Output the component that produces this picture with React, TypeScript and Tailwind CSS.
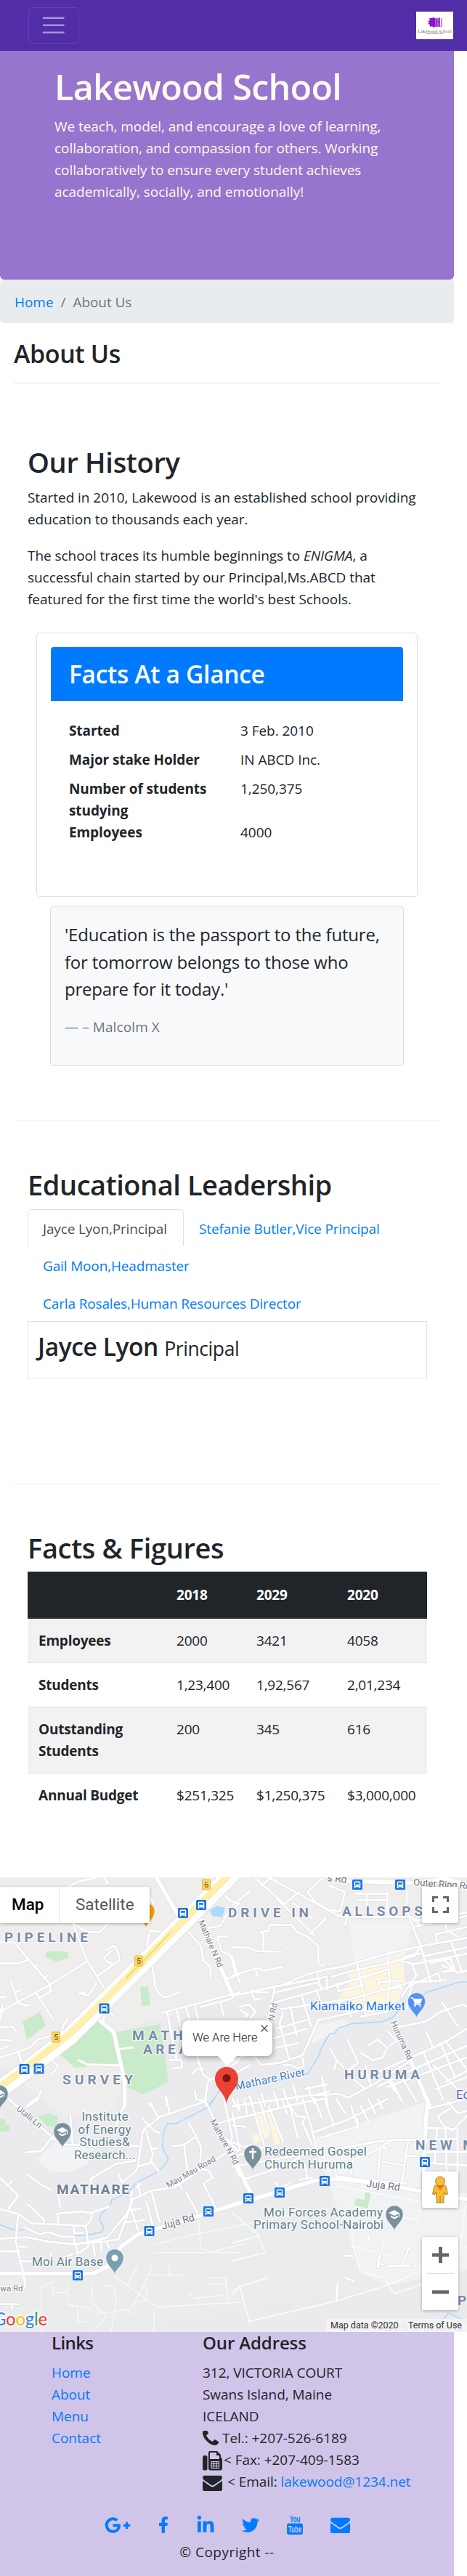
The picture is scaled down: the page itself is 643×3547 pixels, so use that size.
import React from "react";
import { FaFacebookF, FaGooglePlusG, FaLinkedinIn, FaTwitter } from "react-icons/fa";

const BODY = "font-['Open_Sans','Noto_Sans',sans-serif] text-[19px] leading-[30px] tracking-[-0.05px]";

function Logo() {
  return (
    <svg viewBox="0 0 51 38" className="h-[38px] w-[51px] bg-white">
      <path d="M24 8l2 1v12l-2 1-2-2-3 1v-3l-3-1 2-2-2-2 3-1-1-3 3 0z" fill="#8a14c8" />
      <path d="M26 9h3l4-1v12l2 1h-9z" fill="#b45fe0" />
      <path d="M28 10v10M28 14h4M32 9v11M35 9v12" stroke="#8a14c8" strokeWidth="1" fill="none" />
      <text x="25.500" y="28.500" textAnchor="middle" fontSize="5.600" fontFamily="Liberation Serif, serif" fill="#555" textLength="46">Lakewood school</text>
      <path d="M14 30.500h23" stroke="#888" strokeWidth="1" strokeDasharray="2 .7" />
    </svg>
  );
}

function Navbar() {
  return (
    <nav className="flex h-[70px] items-center justify-between bg-[#512da8] pl-[39px] pr-[19px]">
      <button className="flex h-[50px] w-[70px] items-center justify-center rounded-[5px] border border-white/10" aria-label="Menu">
        <svg viewBox="0 0 30 30" className="h-[37.5px] w-[37.5px]" stroke="rgba(255,255,255,.5)" strokeWidth="2" strokeLinecap="round">
          <path d="M4 7h22M4 15h22M4 23h22" />
        </svg>
      </button>
      <Logo />
    </nav>
  );
}

const FACTS = [
  ["Started", "3 Feb. 2010", "mb-[10px]"],
  ["Major stake Holder", "IN ABCD Inc.", "mb-[10px]"],
  ["Number of students studying", "1,250,375", ""],
  ["Employees", "4000", ""],
];

function FactsCard() {
  return (
    <div className="ml-[50px] mt-[31px] h-[364px] w-[525px] rounded-[5px] border border-[#dfdfdf] p-[19px]">
      <div className="h-[74px] rounded-t-[4px] border-b border-[#006fe6] bg-[#007bff] px-[25px] pt-[16px]">
        <h3 className="text-[33.5px] font-semibold leading-[42px] tracking-[-0.009em] text-white">Facts At a Glance</h3>
      </div>
      <dl className="px-[25px] pt-[26px]">
        {FACTS.map(([k, v, gap]) => (
          <div key={k} className={`flex ${gap}`}>
            <dt className="w-[236px] shrink-0 pr-[30px] font-bold tracking-[-0.005em]">{k}</dt>
            <dd>{v}</dd>
          </div>
        ))}
      </dl>
    </div>
  );
}

function Quote() {
  return (
    <blockquote className="ml-[69px] mt-[12px] h-[221px] w-[487px] rounded-[5px] border border-[#d9dadb] bg-[#f8f9fa] px-[19px] pt-[20px]">
      <p className="whitespace-nowrap text-[24px] leading-[37.5px] tracking-[-0.2px]">
        'Education is the passport to the future,<br />for tomorrow belongs to those who<br />prepare for it today.'
      </p>
      <footer className="mt-[18px] tracking-[0.1px] text-[#6c757d]">— – Malcolm X</footer>
    </blockquote>
  );
}

const ROWS = [
  ["Employees", "2000", "3421", "4058"],
  ["Students", "1,23,400", "1,92,567", "2,01,234"],
  ["Outstanding Students", "200", "345", "616"],
  ["Annual Budget", "$251,325", "$1,250,375", "$3,000,000"],
];

function Figures() {
  return (
    <table className="ml-[38px] mt-[9px] w-[550px] table-fixed border-collapse text-left tracking-[-0.012em]">
      <colgroup>
        <col className="w-[190px]" />
        <col className="w-[110px]" />
        <col className="w-[125px]" />
        <col className="w-[125px]" />
      </colgroup>
      <thead>
        <tr className="h-[63px] border-b-2 border-t border-[#32383e] bg-[#212529] text-white">
          {["", "2018", "2029", "2020"].map((h) => (
            <th key={h} className="pl-[15px] font-bold">{h}</th>
          ))}
        </tr>
      </thead>
      <tbody>
        {ROWS.map(([name, ...cells], i) => (
          <tr key={name} className={i % 2 === 0 ? "border-b border-[#dee2e6] bg-[#f2f2f2]" : i === 1 ? "border-b border-[#dee2e6]" : ""}>
            <th className="py-[15px] pl-[15px] pr-[30px] align-top font-bold">
              <span className={name === "Annual Budget" ? "whitespace-nowrap" : ""}>{name}</span>
            </th>
            {cells.map((c) => (
              <td key={c} className="py-[15px] pl-[15px] align-top">{c}</td>
            ))}
          </tr>
        ))}
      </tbody>
    </table>
  );
}

/* The map is drawn in four tiles, each at three units to the pixel. */
const TILES = [
  {
    at: "translate(0 -15) scale(.33333)",
    minor: [
      "M280 85L330 60 400 45M430 45L447 70", "M300 235L360 270 410 272 450 235", "M0 312L60 315 205 485",
      "M0 400H80L118 385M145 418L153 408M180 465L196 450", "M300 235L360 390 440 515", "M0 600L205 490 360 392",
      "M405 450L490 390Q500 365 472 328L442 345M466 345L430 375 440 392 462 400", "M148 522L220 632", "M205 490L210 515 160 545",
      "M45 472L75 565M60 520L88 510M75 560L105 575 122 572", "M0 540H25M10 575L0 630", "M0 590L15 600", "M0 665L55 662 65 682", "M0 715L50 720M0 755L35 742",
      "M0 790L75 765 125 748 155 715 250 690 265 650 282 628", "M75 765L92 820", "M215 800L240 825 212 862",
      "M398 475L395 490 365 532 325 525 350 520", "M595 80L635 155M605 330L620 265 665 270", "M765 265L650 370 630 415 640 490Q655 540 690 540L740 520",
      "M765 255L830 330 840 390 865 410 872 460", "M990 150L935 200 912 245 860 255M930 120L950 140 985 155", "M900 290H940M860 292L900 300 915 350 955 370 970 440",
      "M935 465L990 445M955 335H990", "M668 605L990 520", "M690 600L730 800M730 595L760 720M768 585L790 650M805 578L820 640M910 560L925 620M830 580L960 545",
      "M800 740L830 835 840 860 865 880Q850 900 850 990", "M795 855L815 835 840 835M865 885L990 800", "M805 925L810 960 845 970M685 950L690 990M620 980V990",
      "M700 800H750L752 830 712 835", "M325 800L360 818 490 822M490 755L548 748", "M430 610L428 640M455 600L468 620",
      "M170 925L160 950 115 985",
    ],
    major: ["M645 45L735 200M815 195L960 530M400 625L470 685 515 890 515 990"],
    river: ["M910 920L865 990"],
  },
  {
    at: "translate(320 -15) scale(.33333)",
    minor: [
      "M0 160L75 100M95 50L130 80 215 155 275 105M120 80L200 10M150 45L440 205 475 200M180 130L340 285M250 150L330 215M310 105L370 50M385 215L320 280",
      "M310 105L345 150 400 180 445 185 465 105 400 80M465 240L475 210", "M505 112H640V205M555 112V180M520 140H640M490 208H745",
      "M0 335H60L100 350 205 352M128 350V280L115 272 150 265 155 240 245 242 265 270 310 290 355 330V400L370 410 385 400",
      "M0 370L30 480M0 450L100 420 135 430 205 415M95 425L105 458", "M0 535L180 495 210 490 Q320 430 450 415 L640 360 800 325 969 295",
      "M210 490L390 455 390 510M175 520L350 480 370 500M180 560L450 485 640 425M200 590L500 545 730 480 880 470",
      "M0 540L15 525M80 510L90 550 120 545M95 520H150M30 580L70 570 95 600 75 625M30 590L65 615 50 620",
      "M175 500L140 660M350 445L365 500M515 400L545 550 550 620M640 370L650 480 635 590",
      "M410 455L500 430 640 400 750 370M420 490L620 435M430 485L440 515 540 490M600 480L680 470 700 510M600 480L620 510 690 500",
      "M670 385L740 400 760 450 700 535M720 100V180L745 250 775 320 820 480M745 250L969 205M845 310L840 280 969 250M880 235L885 265 930 290",
      "M740 405L969 360M750 370L775 335M790 370L969 335M820 400L900 380 920 430 870 435M905 315L950 440M865 410L920 430M750 225L969 190M735 220L760 215 770 245",
      "M690 390L720 370 775 360M720 590L740 490 850 440 860 470M875 385L930 440 969 430",
      "M210 600L195 650 235 800M240 580L265 700M285 530L325 660M180 670L320 630M170 710L310 670M175 750L270 730M0 805L75 770 120 820 200 810 290 780 355 635 600 580",
      "M345 510L385 600M440 560L470 600M480 600L490 620M530 620L640 600M210 820L240 820 270 835 295 825 290 790",
      "M475 715L520 810 480 840M560 740L600 715 640 750 620 790 580 800 530 770M405 755L430 800 420 840M430 800L460 830M550 820L570 905M640 680L680 720 650 740",
      "M680 665L800 640 860 600 950 570 969 580M865 560L930 660M600 850L870 730 969 670M600 910L700 860 969 740M640 910L969 790M800 680L830 750",
      "M860 730L920 870M880 720L969 840M790 770L870 960M830 820L969 960M700 870L760 970M660 890L700 970M630 850L670 930M880 890L969 845M840 920L969 870",
      "M0 860L75 820M0 990L320 945 440 940 480 955 600 890 740 800",
      "M70 950L85 990M120 940L135 990M170 930L190 990M210 920L230 980M250 900L270 970M310 910L340 980M370 870L395 985M300 920L390 900M340 945L400 930M490 870L550 920",
    ],
    major: ["M400 30L440 60 760 68 880 50 969 75M735 800L815 990"],
    river: ["M969 477H940L800 520 750 570 690 590 660 625 615 642 490 650 440 667 420 690 403 690 375 735 350 795 310 857 290 860 180 885 0 920"],
  },
  {
    at: "translate(0 305) scale(.33333)",
    minor: [
      "M0 325L75 400 35 455M40 350L52 340M112 312L170 355 210 375M240 395L248 445M115 435L182 500 180 515",
      "M0 455L75 475 130 515 220 518 355 525 375 500 380 470 450 445M75 475L65 590 95 715 105 780 90 790",
      "M230 475L330 465 380 472M240 475V515M100 530L165 560 200 550 250 568 305 570 320 640M355 525L365 610 320 640M305 525V555H345",
      "M0 578L110 572 200 590 300 600 430 590 490 580M320 600L440 575 520 480 550 415 620 380 720 365 930 225",
      "M0 630H80M80 610H110M90 670L130 672M0 848H75M50 848V870M265 655L300 640M210 640V660M385 600L392 650M415 585L420 625M440 590L450 615",
      "M375 350V330L480 268 560 255M490 315L505 345 560 300 570 280 590 130 660 75 850 10M570 280L620 265 632 230 605 140 600 130M590 85L640 135 660 140M620 15L655 80M690 0L700 60M625 205H650M625 260L655 298",
      "M290 65L300 190H270L230 170 35 0M105 222L170 215 215 160M480 110L520 0M300 190L570 195",
      "M710 195L760 190 810 155 780 100M760 190L775 300M810 155L830 200 825 290 860 295 878 325 840 350 890 450",
      "M545 380L540 440 490 580M570 350L580 400M580 350L565 365M540 450L570 540M530 460L580 455M520 510L595 500M605 425L635 540M625 380L660 510M770 390L815 470M990 320L845 0M890 105L990 75M925 0L960 160 950 185M960 0L990 50M930 160L980 215 990 210",
      "M740 355L750 370M160 0L110 35",
    ],
    major: ["M0 722H385L450 690 500 610 570 560 640 540 830 480 990 430"],
    river: ["M885 0L850 40 725 103 692 102 675 140 670 200 695 250 680 275 640 308 565 345 530 385 490 405 462 418 455 440 415 480 412 500 428 530 420 550 365 562 310 565", "M0 520L65 545 105 540"],
  },
  {
    at: "translate(320 305) scale(.33333)",
    minor: [
      "M0 85L290 15 380 0M0 180L50 200 75 190M0 60L30 210M0 110L55 115M20 0L30 40M50 0L60 60M75 0L130 190M110 0L150 130M150 30L210 180M205 0L225 60M235 20L270 160M240 30L265 70 300 75 290 100 330 190",
      "M290 0L330 130 345 200M340 0L370 80M380 0L420 110M430 0L465 60M490 30L520 120M530 30L570 110M560 0L590 60M600 0L620 40",
      "M330 140L480 85 640 0M365 160L520 115 515 80M0 280L640 170M0 240L130 200M55 330L210 280 345 200",
      "M420 280L430 320 540 335 720 350M490 310L500 250M610 210L600 330M620 260L710 275M725 175L700 350M500 250L580 220 660 168 760 170M620 195L640 210M720 235H760M275 335L330 325M180 345L190 370 235 350M300 270L310 330",
      "M805 120L930 125V300M845 120L835 265M880 125L885 300M800 170L930 165M800 220H969M805 265L969 275M810 40L969 0M850 75L870 110 910 130 969 70M890 10L930 60 969 50M850 70L900 40",
      "M560 565L570 595M460 648L500 650M465 740L500 752M435 755L430 835M600 695L610 640M600 680L625 685M645 690H735M700 690L720 640 725 620 740 615",
    ],
    major: ["M0 440L340 338 440 330 640 355 760 378 969 415", "M805 0L790 260 792 380", "M0 230L75 390"],
    river: ["M860 925L892 885 969 920"],
  },
];

const AIR_BASE_PATHS =
  "M640 600L820 555 960 530 1200 480M820 500L830 620 880 630 1000 600M630 680L610 740 545 860M640 635H1000M525 770L570 685M475 735L650 860 990 840M605 725L770 730M700 690V730M600 770L610 830 560 840M380 770V840L440 900 380 960M430 770L470 775 480 830 460 960M170 960V780L215 755 220 800 275 800M280 745V850L380 865M320 865V920H350M390 890L520 870 560 890M635 870V970M780 800L800 825 920 810M860 740H930L940 830 990 780M855 765H935M820 820V840";

function Bus({ x, y }: { x: number; y: number }) {
  return (
    <g transform={`translate(${x} ${y})`}>
      <rect x="-7" y="-7" width="14" height="14" rx="1.500" fill="#1a73e8" />
      <rect x="-4.300" y="-4.600" width="8.600" height="8" rx="1.500" fill="#fff" />
      <rect x="-3" y="-2.800" width="6" height="2.600" fill="#1a73e8" />
      <path d="M-3.500 3v2M3.500 3v2" stroke="#fff" strokeWidth="1.600" />
      <circle cx="-2.400" cy="1.600" r=".7" fill="#1a73e8" />
      <circle cx="2.400" cy="1.600" r=".7" fill="#1a73e8" />
    </g>
  );
}

function Pin({ x, y, fill, children }: { x: number; y: number; fill: string; children?: React.ReactNode }) {
  return (
    <g transform={`translate(${x} ${y})`}>
      <path d="M0 22C-1 16-12 10-12 0A12 12 0 0 1 12 0C12 10 1 16 0 22z" fill={fill} stroke="#fff" strokeOpacity=".6" strokeWidth=".6" />
      {children}
    </g>
  );
}

const Cap = () => (
  <path d="M0-6L-8-2 0 2 6-.8V4H7.200V-1.500zM-5 1.500V4L0 6.500 5 4V1.500L0 4z" fill="#fff" />
);

function Shield({ x, y, n }: { x: number; y: number; n: string }) {
  return (
    <g>
      <rect x={x - 5.5} y={y - 7} width="11" height="14" rx="1" fill="#fdd663" stroke="#e8b93a" strokeWidth="1" />
      <text x={x} y={y + 4} textAnchor="middle" fontSize="11" fill="#5c5540">{n}</text>
    </g>
  );
}

function MapDrawing() {
  const halo = { stroke: "#fff", strokeWidth: 2.5, strokeOpacity: 0.8, paintOrder: "stroke" as const, strokeLinejoin: "round" as const };
  return (
    <svg viewBox="0 0 643 626" className="block h-[626px] w-[643px]" fontFamily="Roboto, sans-serif">
      <rect width="643" height="626" fill="#efeeed" />
      <path d="M180 205L320 170 643 80V626H0V260L90 330 160 320z" fill="#ebebee" />
      <path d="M0 548H130L165 515 210 490 460 420 500 540 530 562 150 626H0z" fill="#ebeded" />
      <path d="M455 420L643 435V540L535 562 497 545 485 505 455 430z" fill="#f1f2f4" />
      <path d="M480 60H567L563 85 558 108 490 125zM430 360L585 310V430L455 420 440 395zM430 205L475 195 482 202 430 230z" fill="#f1f3f5" />
      <path d="M50 388L75 365 130 375 120 395 100 405 70 406z" fill="#f1f3f5" />
      <path d="M479 130L555 107 558 147 548 170 503 190 490 175 466 167 482 145zM352 328l10-4 5 18 6 12-22 14-4-12 12-5zM367 323l8-2 11 45-8 2z" fill="#fdf5dd" />
      <path d="M83 244L133 198 158 215 164 257 103 262zM160 213L221 202 232 282 198 299 170 287zM31 198L55 186 63 204 37 224zM193 151L204 150 207 176 195 177zM65 102L93 102 94 111 78 116 62 110zM52 329L68 325 79 329 80 345 66 343zM503 432l8 2-5 22-18-5 2-9 12 2zM0 333l7 0v8l7 0v9H0z" fill="#c8ebc9" />
      <path d="M289 45L299 39 310 42 306 55 292 53z" fill="#aadaff" />
      <g fill="none" strokeLinecap="round" strokeLinejoin="round">
        <path d={AIR_BASE_PATHS} transform="translate(0 305) scale(.33333)" stroke="#f8f9f9" strokeWidth="4" />
        <path d="M0 595L110 565M0 670L135 635 105 560 0 470M0 800L30 775 145 740M30 775L70 920M65 920L430 835 640 770 780 710M495 600L530 715 630 740 645 770 670 805 800 760M500 560L495 610 660 650M625 580L600 690M430 360L780 425 770 500 640 480M940 620L969 610M960 440L940 640" transform="translate(320 305) scale(.33333)" stroke="#fafbfb" strokeWidth="5" />
        {TILES.map((t) => (
          <g key={t.at} transform={t.at}>
            {t.river.map((d) => <path key={d} d={d} stroke="#aadaff" strokeWidth="5" />)}
          </g>
        ))}
        {TILES.map((t) => (
          <g key={t.at} transform={t.at} stroke="#dde0e6">
            {t.minor.map((d) => <path key={d} d={d} strokeWidth="13" />)}
            {t.major.map((d) => <path key={d} d={d} strokeWidth="20" />)}
          </g>
        ))}
        {TILES.map((t) => (
          <g key={t.at} transform={t.at} stroke="#fff">
            {t.minor.map((d) => <path key={d} d={d} strokeWidth="8.500" />)}
            {t.major.map((d) => <path key={d} d={d} strokeWidth="16" />)}
          </g>
        ))}
        <g transform="translate(0 -15) scale(.33333)">
          <path d="M-40 950L110 840 290 700 480 510 900 90 1000 -10" stroke="#dde0e6" strokeWidth="76" />
          <path d="M-40 950L110 840 290 700 480 510 900 90 1000 -10" stroke="#fff" strokeWidth="70" />
          <path d="M-40 940L110 830 290 690 480 505 900 80 1000 -20" stroke="#ffefaf" strokeWidth="30" />
          <path d="M520 462L585 400 700 278" stroke="#f2ce62" strokeWidth="4" />
        </g>
      </g>
      <Pin x={201} y={47} fill="#f29900" />
      <Shield x={284} y={10} n="6" />
      <Shield x={191} y={115} n="5" />
      <Shield x={77} y={220} n="5" />
      {[[252, 49], [277, 38], [143.5, 180.5], [33.5, 264], [53.5, 263.5], [492, 10], [551, 10], [287, 460], [205.5, 487], [107, 548], [385, 434], [342, 442], [447, 418], [585, 392]].map(([x, y]) => (
        <Bus key={`${x}-${y}`} x={x} y={y} />
      ))}
      <g {...halo} fill="#7a8ba9" fontWeight="700" fontSize="19">
        <text x="6" y="88.500" textLength="115">PIPELINE</text>
        <text x="314" y="54.500" textLength="111">DRIVE IN</text>
        <text x="471" y="52.500" textLength="111">ALLSOPS</text>
        <text x="86" y="284.500" textLength="97">SURVEY</text>
        <text x="182" y="224" textLength="88">MATHA</text>
        <text x="197" y="243" textLength="62">AREA</text>
        <text x="474" y="277.500" textLength="104">HURUMA</text>
        <text x="572" y="374.500" textLength="82">NEW M</text>
        <text x="630" y="589">P</text>
        <text x="78" y="435.500" textLength="100" fill="#6d7f92">MATHARE</text>
      </g>
      <g {...halo} fill="#5f7f8c" fontSize="17">
        <g textAnchor="middle">
          <text x="144.500" y="335" textLength="64">Institute</text>
          <text x="144" y="352.500" textLength="73">of Energy</text>
          <text x="144" y="370" textLength="69">Studies&amp;</text>
          <text x="144" y="387.500" textLength="84">Research...</text>
        </g>
        <text x="44" y="535" textLength="98">Moi Air Base</text>
        <text x="364" y="383" textLength="141">Redeemed Gospel</text>
        <text x="364" y="401" textLength="122">Church Huruma</text>
        <text x="363" y="466.500" textLength="164">Moi Forces Academy</text>
        <text x="349" y="484" textLength="179">Primary School-Nairobi</text>
        <text x="427" y="183" textLength="131" fill="#1a73e8">Kiamaiko Market</text>
        <text x="628" y="305" fill="#5763c9">Eq</text>
        <text x="530" y="625" fill="#9aa5ad">SOS Children's</text>
      </g>
      <g {...halo} fill="#7b8087" fontSize="11.500">
        <text transform="translate(273 61) rotate(67)" textLength="69">Mathare N Rd</text>
        <text transform="translate(289 336) rotate(61)" textLength="69">Mathare N Rd</text>
        <text transform="translate(377 198) rotate(-78)">N Rd</text>
        <text transform="translate(538 200) rotate(66)" textLength="57">Huruma Rd</text>
        <text transform="translate(232 428) rotate(-30)" textLength="76">Mau Mau Road</text>
        <text transform="translate(22 320) rotate(39)" textLength="41">Utalii Ln</text>
        <text transform="translate(-6 570)">awa Rd</text>
        <g fontSize="14" fill="#70757a">
          <text transform="translate(224 485) rotate(-16)">Juja Rd</text>
          <text transform="translate(504 426) rotate(7)">Juja Rd</text>
          <text transform="translate(450 5) rotate(6)">s Rd</text>
          <text transform="translate(569 11) rotate(4)" fontSize="13">Outer Ring Rd</text>
        </g>
        <text transform="translate(325 293) rotate(-12)" fontSize="15.500" fill="#4a80c4" textLength="98">Mathare River</text>
      </g>
      <Pin x={86} y={350} fill="#78909c"><Cap /></Pin>
      <Pin x={-1} y={298} fill="#78909c"><Cap /></Pin>
      <Pin x={543} y={464} fill="#78909c"><Cap /></Pin>
      <Pin x={158} y={524} fill="#7b9eb0"><circle r="4.500" fill="#fff" /></Pin>
      <Pin x={348} y={381} fill="#78909c"><path d="M0-8V7M-5-3H5" stroke="#fff" strokeWidth="2.500" /></Pin>
      <Pin x={573.5} y={171} fill="#5491f5">
        <path d="M-8-5h3L-2 2h7L7-3H-4M-2 2L-3 4H6" fill="none" stroke="#fff" strokeWidth="1.400" />
        <path d="M-4-3H7L5 2H-2z" fill="#fff" />
        <circle cx="-2" cy="6" r="1.200" fill="#fff" /><circle cx="5" cy="6" r="1.200" fill="#fff" />
      </Pin>
      <g transform="translate(312 276)">
        <path d="M0 36C-1 22-16 15-16 1A16 16 0 0 1 16 1C16 15 1 22 0 36z" fill="#ea4335" />
        <circle cy="0.500" r="5.600" fill="#811411" />
      </g>
      <text y="617" x="-9" fontSize="24" fontWeight="500" letterSpacing="-.3" stroke="#fff" strokeWidth="3" paintOrder="stroke" fontFamily="Lato, sans-serif">
        <tspan fill="#4285f4">G</tspan><tspan fill="#ea4335">o</tspan><tspan fill="#fbbc05">o</tspan><tspan fill="#4285f4">g</tspan><tspan fill="#34a853">l</tspan><tspan fill="#ea4335">e</tspan>
      </text>
    </svg>
  );
}

function MapPanel() {
  return (
    <section className="relative h-[626px] overflow-hidden font-[Roboto,sans-serif] tracking-normal">
      <MapDrawing />
      <div className="absolute left-0 top-[13px] flex h-[50px] rounded-r-[2px] bg-white shadow-[0_1px_4px_rgba(0,0,0,.3)]">
        <span className="w-[82px] border-r border-[#e6e6e6] pl-[16px] text-[22.500px] font-medium leading-[49px] text-black">Map</span>
        <span className="w-[124px] pl-[22px] text-[22.500px] leading-[49px] text-[#565656]">Satellite</span>
      </div>
      <div className="absolute left-[251px] top-[197px] h-[49px] w-[124px] rounded-[8px] bg-white shadow-[0_2px_7px_1px_rgba(0,0,0,.3)]">
        <span className="block pl-[14px] pt-[9px] text-[16.500px] font-light leading-[30px] text-[#222]">We Are Here</span>
        <svg viewBox="0 0 10 10" className="absolute right-[6px] top-[6px] h-[10px] w-[10px]" stroke="#555" strokeWidth="1.400"><path d="M.5.5l9 9M9.500.5l-9 9" /></svg>
        <svg viewBox="0 0 28 15" className="absolute left-[48px] top-[48px] h-[15px] w-[28px]"><path d="M0 0H28L14 15z" fill="#fff" /></svg>
      </div>
      <div className="absolute left-[581px] top-[13px] flex h-[50px] w-[50px] items-center justify-center rounded-[2px] bg-white shadow-[0_1px_4px_rgba(0,0,0,.3)]">
        <svg viewBox="0 0 23 23" className="h-[23px] w-[23px]" fill="none" stroke="#666" strokeWidth="3"><path d="M1.500 8V1.500H8M15 1.500h6.500V8M21.500 15v6.500H15M8 21.500H1.500V15" /></svg>
      </div>
      <div className="absolute left-[581px] top-[405px] flex h-[50px] w-[50px] items-center justify-center rounded-[2px] bg-white shadow-[0_1px_4px_rgba(0,0,0,.3)]">
        <svg viewBox="0 0 22 38" className="h-[38px] w-[22px]" fill="#fbbc2d" stroke="#8a6d2a" strokeWidth=".8">
          <path d="M5 13h12q2 0 2.500 3l2 9-3 1-1.500-4-1 6v9H6V28l-1-6-1.500 4-3-1 2-9Q3 13 5 13z" />
          <path d="M6 13.500h10L11 20z" fill="#e07b28" stroke="none" />
          <circle cx="11" cy="7.500" r="6.500" />
          <path d="M11 28v9" />
        </svg>
      </div>
      <div className="absolute left-[581px] top-[495px] flex h-[101px] w-[50px] flex-col items-center rounded-[2px] bg-white shadow-[0_1px_4px_rgba(0,0,0,.3)]">
        <svg viewBox="0 0 50 101" className="h-[101px] w-[50px]" fill="none" stroke="#666" strokeWidth="5"><path d="M14 25H37M25.500 14V36M14 76H37" /><path d="M7 50.500H44" stroke="#e0e0e0" strokeWidth="1" /></svg>
      </div>
      <div className="absolute bottom-0 right-0 flex h-[18px] w-[194px] justify-between whitespace-nowrap bg-[#f5f5f5]/80 pl-[6px] pr-[7px] text-[12.500px] leading-[18px] text-[#333]">
        <span>Map data ©2020</span><span>Terms of Use</span>
      </div>
    </section>
  );
}

function Envelope({ className }: { className: string }) {
  return (
    <svg viewBox="0 0 1792 1792" className={className} fill="currentColor">
      <path d="M1792 710v794q0 66-47 113t-113 47h-1472q-66 0-113-47t-47-113v-794q44 49 101 87 362 246 497 345 57 42 92.500 65.500t94.500 48 110 24.500h2q51 0 110-24.500t94.500-48 92.500-65.500q170-123 498-345 57-39 100-87zm0-294q0 79-49 151t-122 123q-376 261-468 325-10 7-42.500 31t-54 38.500-52 32.500-57.500 27-50 9h-2q-23 0-50-9t-57.500-27-52-32.500-54-38.500-42.500-31q-91-64-262-182.500t-205-142.500q-62-42-117-115.500t-55-136.500q0-78 41.500-130t118.500-52h1472q65 0 112.500 47t47.500 113z" />
    </svg>
  );
}

function Phone() {
  return (
    <svg viewBox="192 256 1408 1280" className="mt-[5px] h-[20px] w-[22px]" fill="currentColor">
      <path d="M1600 1240q0 27-10 70.500t-21 68.500q-21 50-122 106-94 51-186 51-27 0-53-3.500t-57.500-12.500-47-14.500-55.500-20.500-49-18q-98-35-175-83-127-79-264-216t-216-264q-48-77-83-175-3-9-18-49t-20.500-55.500-14.500-47-12.500-57.500-3.500-53q0-92 51-186 56-101 106-122 25-11 68.500-21t70.500-10q14 0 21 3 18 6 53 76 11 19 30 54t35 63.500 31 53.500q3 4 17.500 25t21.500 35.500 7 28.500q0 20-28.500 50t-62 55-62 53-28.500 46q0 9 5 22.500t8.500 20.500 14 24 11.500 19q76 137 174 235t235 174q2 1 19 11.500t24 14 20.500 8.500 22.500 5q18 0 46-28.500t53-62 55-62 50-28.500q14 0 28.500 7t35.500 21.500 25 17.500q25 15 53.500 31t63.500 35 54 30q70 35 76 53 3 7 3 21z" />
    </svg>
  );
}

function Fax() {
  return (
    <svg viewBox="0 0 27 27" className="mt-[3px] h-[27px] w-[27px]">
      <rect x="0" y="6" width="6.500" height="20.500" rx="2.500" fill="currentColor" />
      <path d="M8 2Q8 0 10 0H20L25 5V9Q27 10 27 12V23.500Q27 26.500 24 26.500H11Q8 26.500 8 23.500z" fill="currentColor" />
      <path d="M10 2H19V6H23V11H10z" fill="#d1c4e9" />
      <path d="M12 14.500h10.500v9H12zM15.500 14.500v9M19 14.500v9M12 17.500h10.500M12 20.500h10.500" stroke="#d1c4e9" strokeWidth="1.200" fill="none" />
    </svg>
  );
}

function YouTube() {
  return (
    <svg viewBox="0 0 22 27" className="h-[27px] w-[22px]" fill="#007bff" fontFamily="Liberation Sans, sans-serif" fontWeight="700">
      <rect y="11.500" width="22" height="15.500" rx="3" />
      <text x="4" y="9.800" fontSize="12" textLength="14.500" lengthAdjust="spacingAndGlyphs">You</text>
      <text x="1.800" y="24" fontSize="12" textLength="18.500" lengthAdjust="spacingAndGlyphs" fill="#d1c4e9">Tube</text>
    </svg>
  );
}

function Footer() {
  return (
    <footer className="h-[336px] w-[625px] bg-[#d1c4e9]">
      <div className="flex pl-[71px]">
        <div className="w-[208px]">
          <h5 className="mb-[11px] text-[24px] font-semibold leading-[30px] tracking-[-0.025em]">Links</h5>
          <ul className="text-[#007bff]">
            {["Home", "About", "Menu", "Contact"].map((l) => <li key={l}>{l}</li>)}
          </ul>
        </div>
        <div>
          <h5 className="mb-[11px] text-[24px] font-semibold leading-[30px] tracking-[-0.005em]">Our Address</h5>
          <address className="whitespace-nowrap not-italic">
            <p>312, VICTORIA COURT</p>
            <p>Swans Island, Maine</p>
            <p>ICELAND</p>
            <p className="flex h-[30px] gap-[5px]"><Phone />Tel.: +207-526-6189</p>
            <p className="flex h-[30px] gap-[2px]"><Fax />&lt; Fax: +207-409-1583</p>
            <p className="flex h-[30px] gap-[7px]"><Envelope className="mt-[3px] h-[27px] w-[27px]" /><span>&lt; Email: <a className="text-[#007bff]">lakewood@1234.net</a></span></p>
          </address>
        </div>
      </div>
      <div className="mt-[31px] flex h-[28px] items-center pl-[144px] text-[#007bff]">
        <FaGooglePlusG className="mr-[38px] h-[36px] w-[36px]" />
        <FaFacebookF className="mr-[39px] h-[25px] w-[14px]" />
        <FaLinkedinIn className="mr-[38px] h-[26px] w-[24px]" />
        <FaTwitter className="mr-[38px] h-[24px] w-[24px]" />
        <YouTube />
        <Envelope className="ml-[38px] h-[27px] w-[27px]" />
      </div>
      <p className="mt-[8px] text-center tracking-[0.025em]">© Copyright --</p>
    </footer>
  );
}

const H2 = "ml-[38px] text-[38px] font-semibold leading-[48px]";
const TAB = "h-[51.300px] px-[21px] pt-[12px]";

export default function App() {
  return (
    <div className={`min-h-[3547px] w-[643px] overflow-hidden bg-white text-[#212529] ${BODY}`}>
      <Navbar />
      <header className="h-[315px] w-[625px] rounded-b-[6px] bg-[#9575cd] pl-[75px] pt-[19px] text-[#fffaf0]">
        <h1 className="text-[48.500px] font-semibold leading-[60px] tracking-[-0.015em]">Lakewood School</h1>
        <p className="mt-[10px] whitespace-nowrap">
          We teach, model, and encourage a love of learning,<br />collaboration, and compassion for others. Working<br />collaboratively to ensure every student achieves<br />academically, socially, and emotionally!
        </p>
      </header>
      <div className="flex h-[60px] w-[625px] gap-[10px] rounded-[5px] bg-[#e9ecef] pl-[20px] pt-[16px] text-[#6c757d]">
        <a className="text-[#007bff]">Home</a><span>/</span><span>About Us</span>
      </div>
      <h2 className="ml-[19px] mt-[21px] text-[34px] font-semibold leading-[42px] tracking-[-0.012em]">About Us</h2>
      <hr className="ml-[19px] mt-[19px] w-[587px] border-[#e5e5e5]" />

      <h2 className={`mt-[84px] tracking-[-0.008em] ${H2}`}>Our History</h2>
      <div className="ml-[38px] mt-[10px] whitespace-nowrap">
        <p>Started in 2010, Lakewood is an established school providing<br />education to thousands each year.</p>
        <p className="mt-[20px]">The school traces its humble beginnings to <em>ENIGMA</em>, a<br />successful chain started by our Principal,Ms.ABCD that<br />featured for the first time the world's best Schools.</p>
      </div>
      <FactsCard />
      <Quote />
      <hr className="ml-[19px] mt-[75px] w-[587px] border-[#e9e9e9]" />

      <h2 className={`mt-[63px] tracking-[-0.012em] ${H2}`}>Educational Leadership</h2>
      <div className="ml-[38px] mt-[10px] flex h-[154px] w-[550px] flex-wrap content-start whitespace-nowrap tracking-[-0.15px] text-[#007bff]">
        <a className="h-[51.300px] w-[215px] rounded-t-[5px] border border-b-0 border-[#dee2e6] px-[20px] pt-[11px] text-[#495057]">Jayce Lyon,Principal</a>
        <a className={TAB}>Stefanie Butler,Vice Principal</a>
        <a className={`w-full ${TAB}`}>Gail Moon,Headmaster</a>
        <a className={TAB}>Carla Rosales,Human Resources Director</a>
      </div>
      <div className="ml-[38px] h-[79px] w-[550px] border border-[#dee2e6] pl-[13px] pt-[13px]">
        <h3 className="text-[33.500px] font-semibold leading-[42px] tracking-[-0.012em]">Jayce Lyon <small className="text-[26.500px] font-normal">Principal</small></h3>
      </div>
      <hr className="ml-[19px] mt-[145px] w-[587px] border-[#e9e9e9]" />

      <h2 className={`mt-[63px] tracking-[-0.009em] ${H2}`}>Facts &amp; Figures</h2>
      <Figures />
      <div className="h-[83px]" />
      <MapPanel />
      <Footer />
    </div>
  );
}
